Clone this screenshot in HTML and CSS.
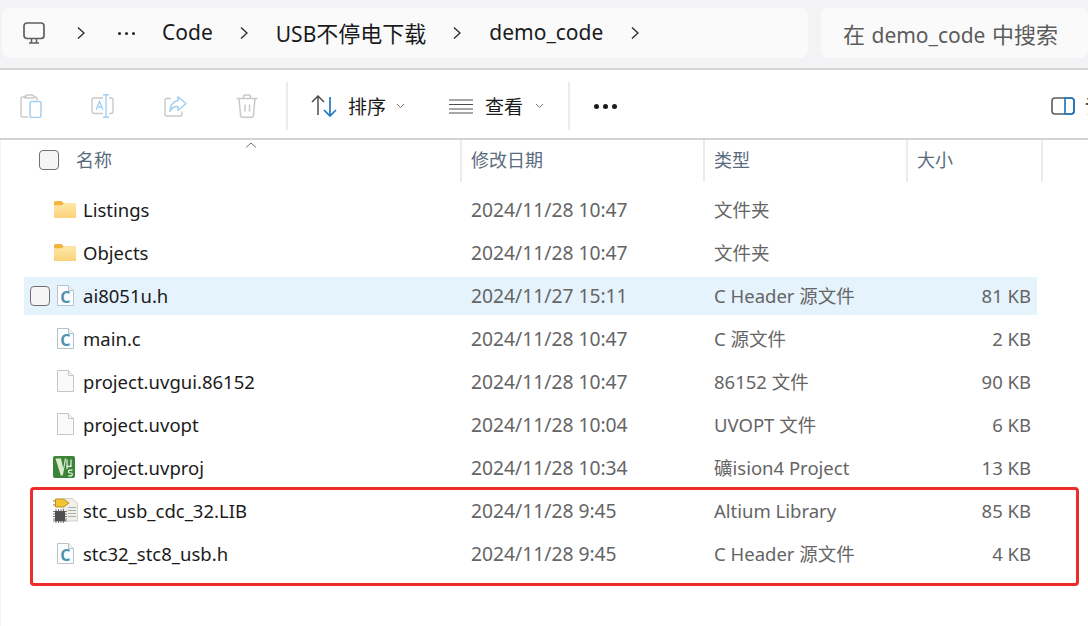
FILE: index.html
```html
<!DOCTYPE html>
<html lang="zh">
<head>
<meta charset="utf-8">
<title>demo_code</title>
<link rel="stylesheet" href="styles.css">
</head>
<body>
<svg class="defs" width="0" height="0" aria-hidden="true">
  <defs>
    <linearGradient id="fg" x1="0" y1="0" x2="0" y2="1"><stop offset="0" stop-color="#fde7a8"/><stop offset="1" stop-color="#fbd27a"/></linearGradient>
    <symbol id="folder" viewBox="0 0 22 17">
      <path d="M0 1.500Q0 0 1.500 0H7.500L10 2.500H20.500Q22 2.500 22 4V15.500Q22 17 20.500 17H1.500Q0 17 0 15.500Z" fill="#f0b53f"/>
      <path d="M0 15.500V4.200H7.500L10 2.500H20.500Q22 2.500 22 4V15.500Q22 17 20.500 17H1.500Q0 17 0 15.500Z" fill="url(#fg)"/>
    </symbol>
    <symbol id="cfile" viewBox="0 0 17 21">
      <path d="M.5 .5H11.500L16.500 5.500V20.500H.5Z" fill="#fcfdfe" stroke="#b7c2c9"/>
      <path d="M11.500 .5V5.500H16.500" fill="#eef2f4" stroke="#b7c2c9"/>
      <text x="8.400" y="17.600" class="c-glyph">C</text>
    </symbol>
    <symbol id="blank" viewBox="0 0 17 22">
      <path d="M.5 .5H11.500L16.500 5.500V21.500H.5Z" fill="#fafafa" stroke="#c6c6c6"/>
      <path d="M11.500 .5V5.500H16.500" fill="#f2f2f2" stroke="#c6c6c6"/>
    </symbol>
    <symbol id="kv" viewBox="0 0 22 22">
      <rect width="22" height="22" rx="2" fill="#3b8438"/>
      <path d="M2.500 2.500H8L10.200 12.500L11.800 2.500H13.200L9.800 19.500H7.800Z" fill="#dcebcd"/>
      <path d="M14 3.500V8.500Q14 10.500 16 10.500T18 8.500V3.500M18 8.500V11M14 8.500V13" fill="none" stroke="#eef5e4" stroke-width="1.200"/>
      <path d="M19.500 14.200H16.700Q15.500 14.200 15.500 15.600T16.700 17H18Q19.300 17 19.300 18.400T18 19.800H15.300" fill="none" stroke="#f4f8ec" stroke-width="1.200"/>
    </symbol>
    <symbol id="lib" viewBox="0 0 25 25">
      <path d="M10 .5H19L24.500 5V23H10Z" fill="#f1efe6" stroke="#c8c8c0" stroke-width=".8"/>
      <path d="M15 9.500H23M15 12.500H23M15 15.500H23M15 18.500H23" stroke="#9db2bd"/>
      <path d="M2.500 1H10.500L16 5L10.500 9H2.500Z" fill="#f2c531" stroke="#b9932a"/>
      <path d="M0 3H2.500M0 7H2.500" stroke="#8f7a30" stroke-width="1.200"/>
      <path d="M3 11V25M5.500 11V25M8 11V25M10.500 11V25M0 13.500H14M0 16H14M0 18.500H14M0 21H14M0 23H14" stroke="#6b6b6b" stroke-width=".9"/>
      <rect x="2" y="13" width="10" height="10" fill="#505050"/>
    </symbol>
  </defs>
</svg>

<header class="topbar">
  <nav class="crumbs">
    <svg class="pc" width="24" height="24" viewBox="0 0 24 24"><rect x="2" y="2" width="20" height="15.500" rx="3" fill="#fafafb" stroke="#5f5f5f" stroke-width="1.700"/><path d="M9.500 18V22M14.500 18V22M7 22H17" fill="none" stroke="#5f5f5f" stroke-width="1.500"/></svg>
    <svg class="chev c1" width="8" height="14" viewBox="0 0 8 14"><path d="M1 1.500L7 7L1 12.500" fill="none" stroke="#333" stroke-width="1.500"/></svg>
    <span class="more"><i></i><i></i><i></i></span>
    <span class="crumb c-code">Code</span>
    <svg class="chev c2" width="8" height="14" viewBox="0 0 8 14"><path d="M1 1.500L7 7L1 12.500" fill="none" stroke="#333" stroke-width="1.500"/></svg>
    <span class="crumb c-usb">USB<span class="cjk">不停电下载</span></span>
    <svg class="chev c3" width="8" height="14" viewBox="0 0 8 14"><path d="M1 1.500L7 7L1 12.500" fill="none" stroke="#333" stroke-width="1.500"/></svg>
    <span class="crumb c-demo">demo_code</span>
    <svg class="chev c4" width="8" height="14" viewBox="0 0 8 14"><path d="M1 1.500L7 7L1 12.500" fill="none" stroke="#333" stroke-width="1.500"/></svg>
  </nav>
  <div class="search"><span><span class="cjk">在</span> demo_code <span class="cjk">中搜索</span></span></div>
</header>

<section class="toolbar">
  <svg class="tool t-paste" width="22" height="24" viewBox="0 0 22 24"><path d="M7 3H2.500Q1 3 1 4.500V21.500Q1 23 2.500 23H8" fill="none" stroke="#c9c9c9" stroke-width="1.400"/><path d="M5 3Q5 1 7 1H12Q14 1 14 3V4H5ZM14 3H15.500Q17 3 17 5V6.500" fill="none" stroke="#c9c9c9" stroke-width="1.400"/><rect x="10" y="7.500" width="11" height="16" rx="2" fill="none" stroke="#a5cfee" stroke-width="1.500"/></svg>
  <svg class="tool t-rename" width="23" height="24" viewBox="0 0 23 24"><path d="M12 4H3Q1 4 1 6V17Q1 19.500 3 19.500H12M18 4H20Q22 4 22 6V17Q22 19.500 20 19.500H18" fill="none" stroke="#c9c9c9" stroke-width="1.400"/><path d="M12 .7H18M15 .7V23.300M12 23.300H18" fill="none" stroke="#a5cfee" stroke-width="1.400"/><path d="M5 16L8.500 7.500L12 16M6.300 13H10.700" fill="none" stroke="#a5cfee" stroke-width="1.300"/></svg>
  <svg class="tool t-share" width="23" height="21" viewBox="0 0 23 21"><path d="M7 2.500H3Q1 2.500 1 4.500V18Q1 20 3 20H16Q18 20 18 18V15.500" fill="none" stroke="#c9c9c9" stroke-width="1.400"/><path d="M14 .8L22 7.500L14 14.500V10.500Q8.500 10 6 15.500Q6 6.500 14 4.500Z" fill="none" stroke="#a5cfee" stroke-width="1.500" stroke-linejoin="round"/></svg>
  <svg class="tool t-trash" width="22" height="24" viewBox="0 0 22 24"><path d="M.5 4.500H21.500M7.500 4.500V2.500Q7.500 1 9 1H13Q14.500 1 14.500 2.500V4.500M3 4.500L4.500 21Q4.700 23.200 6.500 23.200H15.500Q17.300 23.200 17.500 21L19 4.500M9 10.500V17.500M13.500 10.500V17.500" fill="none" stroke="#c9c9c9" stroke-width="1.500"/></svg>
  <i class="divider"></i>
  <svg class="sort-ico" width="26" height="22" viewBox="0 0 26 22"><path d="M1 7L7 1L13 7M7 1V20" fill="none" stroke="#4f4f4f" stroke-width="1.500"/><path d="M13 15L19 21L25 15M19 2V21" fill="none" stroke="#1f79c4" stroke-width="1.700"/></svg>
  <span class="tool-label l-sort">排序</span>
  <svg class="caret" width="9" height="6" viewBox="0 0 9 6"><path d="M1 1L4.500 4.500L8 1" fill="none" stroke="#777"/></svg>
  <svg class="view-ico" width="24" height="15" viewBox="0 0 24 15"><path d="M0 1H24M0 5.500H24M0 10H24M0 14H24" stroke="#4f4f4f" stroke-width="1.200"/></svg>
  <span class="tool-label l-view">查看</span>
  <svg class="caret caret2" width="9" height="6" viewBox="0 0 9 6"><path d="M1 1L4.500 4.500L8 1" fill="none" stroke="#777"/></svg>
  <i class="divider d2"></i>
  <span class="dots"><i></i><i></i><i></i></span>
  <svg class="pane-ico" width="24" height="18" viewBox="0 0 24 18"><rect x="1" y="1" width="22" height="16" rx="3" fill="none" stroke="#5c5c5c" stroke-width="1.600"/><path d="M14 1H20Q23 1 23 4V14Q23 17 20 17H14Z" fill="none" stroke="#1f79c4" stroke-width="1.700"/></svg>
  <span class="pane-label">详细信息</span>
</section>

<section class="table">
  <div class="head">
    <span class="sort-up"><svg width="12" height="6" viewBox="0 0 12 6"><path d="M1 5.500L6 1L11 5.500" fill="none" stroke="#777"/></svg></span>
    <div class="hcell h-name"><i class="check"></i><span>名称</span></div>
    <div class="hcell h-date">修改日期</div>
    <div class="hcell h-type">类型</div>
    <div class="hcell h-size">大小</div>
  </div>
  <div class="rows">
    <div class="row"><div class="name"><svg class="ico i-folder"><use href="#folder"/></svg><span>Listings</span></div><div class="date">2024/11/28 10:47</div><div>文件夹</div><div class="size"></div></div>
    <div class="row"><div class="name"><svg class="ico i-folder"><use href="#folder"/></svg><span>Objects</span></div><div class="date">2024/11/28 10:47</div><div>文件夹</div><div class="size"></div></div>
    <div class="row hover"><div class="name"><i class="check row-check"></i><svg class="ico i-c"><use href="#cfile"/></svg><span>ai8051u.h</span></div><div class="date">2024/11/27 15:11</div><div>C Header 源文件</div><div class="size">81 KB</div></div>
    <div class="row"><div class="name"><svg class="ico i-c"><use href="#cfile"/></svg><span>main.c</span></div><div class="date">2024/11/28 10:47</div><div>C 源文件</div><div class="size">2 KB</div></div>
    <div class="row"><div class="name"><svg class="ico i-blank"><use href="#blank"/></svg><span>project.uvgui.86152</span></div><div class="date">2024/11/28 10:47</div><div>86152 文件</div><div class="size">90 KB</div></div>
    <div class="row"><div class="name"><svg class="ico i-blank"><use href="#blank"/></svg><span>project.uvopt</span></div><div class="date">2024/11/28 10:04</div><div>UVOPT 文件</div><div class="size">6 KB</div></div>
    <div class="row"><div class="name"><svg class="ico i-kv"><use href="#kv"/></svg><span>project.uvproj</span></div><div class="date">2024/11/28 10:34</div><div>礦ision4 Project</div><div class="size">13 KB</div></div>
    <div class="row"><div class="name"><svg class="ico i-lib"><use href="#lib"/></svg><span>stc_usb_cdc_32.LIB</span></div><div class="date">2024/11/28 9:45</div><div>Altium Library</div><div class="size">85 KB</div></div>
    <div class="row"><div class="name"><svg class="ico i-c"><use href="#cfile"/></svg><span>stc32_stc8_usb.h</span></div><div class="date">2024/11/28 9:45</div><div>C Header 源文件</div><div class="size">4 KB</div></div>
  </div>
</section>
<div class="highlight"></div>
</body>
</html>
```
FILE: styles.css
```css
html, body { margin: 0; padding: 0; }
body {
  width: 1088px; height: 626px; overflow: hidden; position: relative;
  background: #fff; color: #1b1b1b;
  font-family: "Noto Sans", "Noto Sans CJK SC", sans-serif;
  font-size: 19px;
}
.defs { position: absolute; }
.c-glyph { font: 700 16px "Open Sans", sans-serif; fill: #4d92ad; text-anchor: middle; }
.cjk { font-size: 22px; }

.topbar {
  box-sizing: border-box; background: #f3f3f5;
  padding: 8px 0 10px 2px; display: flex; gap: 13px;
  border-bottom: 2px solid #d6d5d6; height: 70px;
}
.crumbs, .search { background: #fafafb; border-radius: 8px; display: flex; align-items: center; height: 50px; }
.crumbs { width: 806px; flex: none; padding-left: 20px; box-sizing: border-box; }
.search { flex: 1; padding-left: 22px; color: #5c5c5c; font-size: 21px; word-spacing: 1px; white-space: nowrap; }
.pc { flex: none; margin-top: -1px; }
.chev { flex: none; margin-top: -1px; }
.crumb { font-size: 21px; white-space: nowrap; margin-top: -2px; }
.c1 { margin-left: 31px; }
.more { display: flex; gap: 4px; margin-left: 33px; width: 18px; flex: none; }
.more i { width: 3px; height: 3px; border-radius: 50%; background: #222; }
.c-code { margin-left: 26px; }
.c2 { margin-left: 27px; }
.c-usb { margin-left: 28px; }
.c3 { margin-left: 27px; }
.c-demo { margin-left: 28px; }
.c4 { margin-left: 28px; }

.toolbar {
  height: 70px; box-sizing: border-box; display: flex; align-items: center; padding-top: 4px;
  border-bottom: 2px solid #d2d2d2; overflow: hidden; white-space: nowrap;
}
.tool { flex: none; }
.t-paste { margin-left: 20px; }
.t-rename { margin-left: 49px; }
.t-share { margin-left: 50px; }
.t-trash { margin-left: 49px; }
.divider { flex: none; width: 2px; height: 48px; background: #ececec; margin-left: 28px; }
.sort-ico { flex: none; margin-left: 23px; }
.tool-label { font-size: 19px; margin-left: 11px; }
.l-view { margin-left: 12px; }
.caret { flex: none; margin-left: 10px; }
.caret2 { margin-left: 12px; }
.view-ico { flex: none; margin-left: 44px; }
.d2 { margin-left: 24px; }
.dots { display: flex; gap: 4px; margin-left: 24px; }
.dots i { width: 5px; height: 5px; border-radius: 50%; background: #1b1b1b; }
.pane-ico { flex: none; margin-left: 434px; }
.pane-label { font-size: 19px; margin-left: 10px; color: #1b1b1b; }

.table { position: relative; height: 486px; box-shadow: inset 1px 0 0 #f2f2f2; }
.head {
  display: grid; grid-template-columns: 447px 243px 203px 135px;
  height: 43px; margin-left: 15px; width: 1028px;
}
.sort-up { position: absolute; left: 245px; top: 1px; line-height: 0; }
.hcell {
  border-right: 2px solid #ececec; color: #5a6b7d; font-size: 18px;
  display: flex; align-items: center; height: 42px; box-sizing: border-box; padding-bottom: 4px;
}
.h-name { padding-left: 24px; gap: 17px; }
.h-name .check { margin-top: 2px; }
.h-date { padding-left: 9px; }
.h-type { padding-left: 9px; }
.h-size { padding-left: 9px; }
.check {
  display: block; flex: none; width: 18px; height: 18px; border: 1px solid #6f6f6f;
  border-radius: 4px; background: #f5f5f5;
}
.rows { margin-left: 24px; width: 1013px; margin-top: 8px; }
.row {
  display: grid; grid-template-columns: 447px 243px 1fr 95px; align-items: center;
  height: 38px; margin-bottom: 5px; color: #656565; padding: 0 6px 2px 0; box-sizing: border-box;
  font-size: 18.500px;
}
.date { font-size: 19.250px; }
.hover { background: #e5f3fd; }
.name { display: flex; align-items: center; color: #1b1b1b; position: relative; padding-left: 30px; font-size: 18.500px; }
.name span { position: absolute; left: 59px; white-space: nowrap; }
.ico { flex: none; display: block; }
.i-folder { width: 22px; height: 17px; }
.i-c { width: 17px; height: 21px; margin-left: 3px; }
.i-blank { width: 17px; height: 22px; margin-left: 3px; }
.i-kv { width: 22px; height: 22px; margin-left: -1px; }
.i-lib { width: 25px; height: 25px; margin-left: -1px; }
.row-check { position: absolute; left: 6px; top: 50%; margin-top: -9px; }
.size { text-align: right; }

.highlight {
  position: absolute; left: 30px; top: 487px; width: 1049px; height: 99px; box-sizing: border-box;
  border: 3px solid #ec2d2a; border-radius: 4px;
}
```
